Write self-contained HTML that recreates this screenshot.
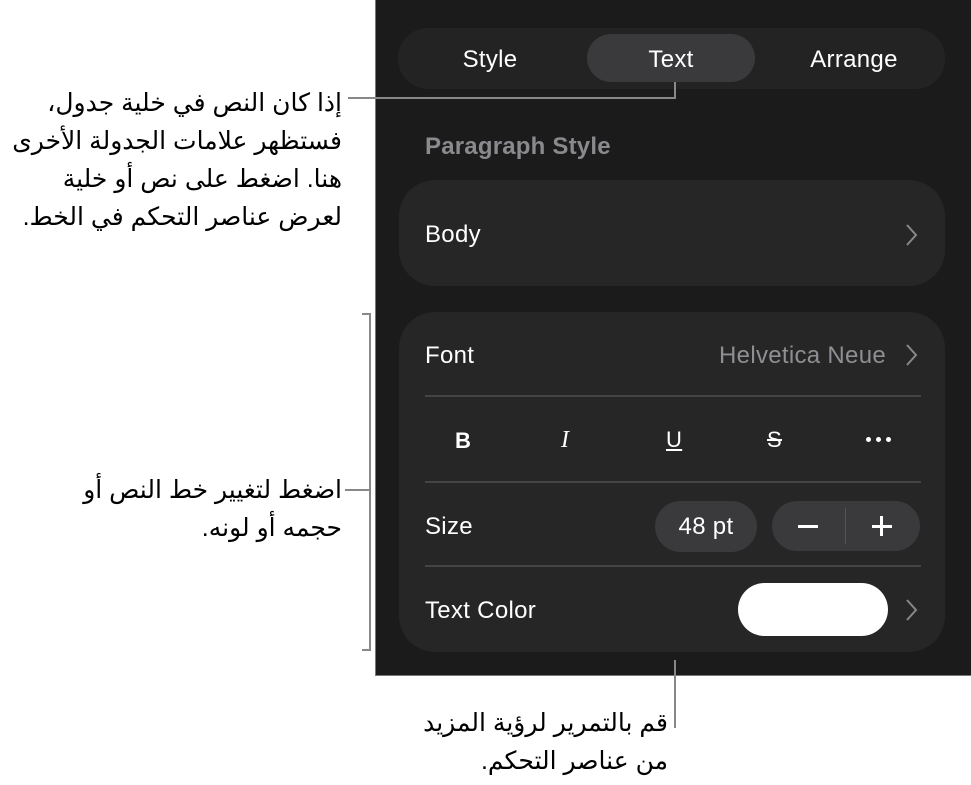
<!DOCTYPE html>
<html><head><meta charset="utf-8"><style>
body{margin:0;width:971px;height:785px;background:#fff;position:relative;overflow:hidden;font-family:"Liberation Sans",sans-serif}
.a{position:absolute}
.panel{left:375px;top:0;width:600px;height:676px;background:#1b1b1b;border-left:1px solid #777;border-bottom:1px solid #777;box-sizing:border-box}
.w{color:#fff;font-size:24px;letter-spacing:0.3px;line-height:28px}
.c{text-align:center}
.ar{position:absolute;font-family:"Liberation Sans","Noto Sans CJK SC",sans-serif;font-size:25px;color:#000;direction:rtl;text-align:right;line-height:38px}
.ln{position:absolute;background:#888}
.sep{position:absolute;left:425px;width:496px;height:2px;background:#444}
</style></head><body>
<div class="a panel"></div>
<div class="a" style="left:398px;top:28px;width:547px;height:61px;border-radius:30px;background:#232323"></div>
<div class="a" style="left:587px;top:34px;width:168px;height:48px;border-radius:24px;background:#3a3a3c"></div>
<div class="a w c" style="left:410px;width:160px;top:46px">Style</div>
<div class="a w c" style="left:591px;width:160px;top:46px">Text</div>
<div class="a w c" style="left:774px;width:160px;top:46px">Arrange</div>
<div class="a" style="left:425px;top:133px;font-size:24px;font-weight:bold;color:#8a8a8e;letter-spacing:0.2px">Paragraph Style</div>
<div class="a" style="left:399px;top:180px;width:546px;height:106px;border-radius:36px;background:#262626"></div>
<div class="a w" style="left:425px;top:221px">Body</div>
<svg class="a" style="left:903px;top:222px" width="16" height="26"><path d="M4 3 L13 13 L4 23" stroke="#888" stroke-width="2" fill="none"/></svg>
<div class="a" style="left:399px;top:312px;width:546px;height:340px;border-radius:36px;background:#262626"></div>
<div class="a w" style="left:425px;top:342px">Font</div>
<div class="a w" style="right:85px;top:342px;color:#8e8e93">Helvetica Neue</div>
<svg class="a" style="left:903px;top:342px" width="16" height="26"><path d="M4 3 L13 13 L4 23" stroke="#888" stroke-width="2" fill="none"/></svg>
<div class="sep" style="top:395px"></div>
<div class="a w" style="left:455px;top:427px;font-weight:bold;font-size:22px">B</div>
<div class="a w" style="left:561px;top:426px;font-style:italic;font-family:'Liberation Serif',serif">I</div>
<div class="a w" style="left:666px;top:426px;text-decoration:underline;font-size:22px">U</div>
<div class="a w" style="left:767px;top:426px;text-decoration:line-through;font-size:22px">S</div>
<div class="a" style="left:866px;top:437px;width:5px;height:5px;border-radius:3px;background:#fff"></div>
<div class="a" style="left:876px;top:437px;width:5px;height:5px;border-radius:3px;background:#fff"></div>
<div class="a" style="left:886px;top:437px;width:5px;height:5px;border-radius:3px;background:#fff"></div>
<div class="sep" style="top:481px"></div>
<div class="a w" style="left:425px;top:513px">Size</div>
<div class="a" style="left:655px;top:501px;width:102px;height:51px;border-radius:26px;background:#3a3a3c"></div>
<div class="a w c" style="left:655px;width:102px;top:513px">48 pt</div>
<div class="a" style="left:772px;top:501px;width:148px;height:50px;border-radius:25px;background:#3a3a3c"></div>
<div class="a" style="left:845px;top:508px;width:1px;height:36px;background:#555"></div>
<div class="a" style="left:798px;top:525px;width:20px;height:3px;background:#fff"></div>
<div class="a" style="left:872px;top:525px;width:20px;height:3px;background:#fff"></div>
<div class="a" style="left:880px;top:516px;width:3px;height:20px;background:#fff"></div>
<div class="sep" style="top:565px"></div>
<div class="a w" style="left:425px;top:597px">Text Color</div>
<div class="a" style="left:738px;top:583px;width:150px;height:53px;border-radius:27px;background:#fff"></div>
<svg class="a" style="left:903px;top:597px" width="16" height="26"><path d="M4 3 L13 13 L4 23" stroke="#888" stroke-width="2" fill="none"/></svg>
<div class="ln" style="left:348px;top:97px;width:328px;height:2px"></div>
<div class="ln" style="left:674px;top:82px;width:2px;height:17px"></div>
<div class="ln" style="left:369px;top:313px;width:2px;height:338px"></div>
<div class="ln" style="left:362px;top:313px;width:9px;height:2px"></div>
<div class="ln" style="left:362px;top:649px;width:9px;height:2px"></div>
<div class="ln" style="left:345px;top:489px;width:25px;height:2px"></div>
<div class="ln" style="left:674px;top:660px;width:2px;height:68px"></div>
<div class="ar" style="right:629px;top:84px;width:400px">إذا كان النص في خلية جدول،<br>فستظهر علامات الجدولة الأخرى<br>هنا. اضغط على نص أو خلية<br>لعرض عناصر التحكم في الخط.</div>
<div class="ar" style="right:629px;top:471px;width:400px">اضغط لتغيير خط النص أو<br>حجمه أو لونه.</div>
<div class="ar" style="right:303px;top:704px;width:400px">قم بالتمرير لرؤية المزيد<br>من عناصر التحكم.</div>
</body></html>
